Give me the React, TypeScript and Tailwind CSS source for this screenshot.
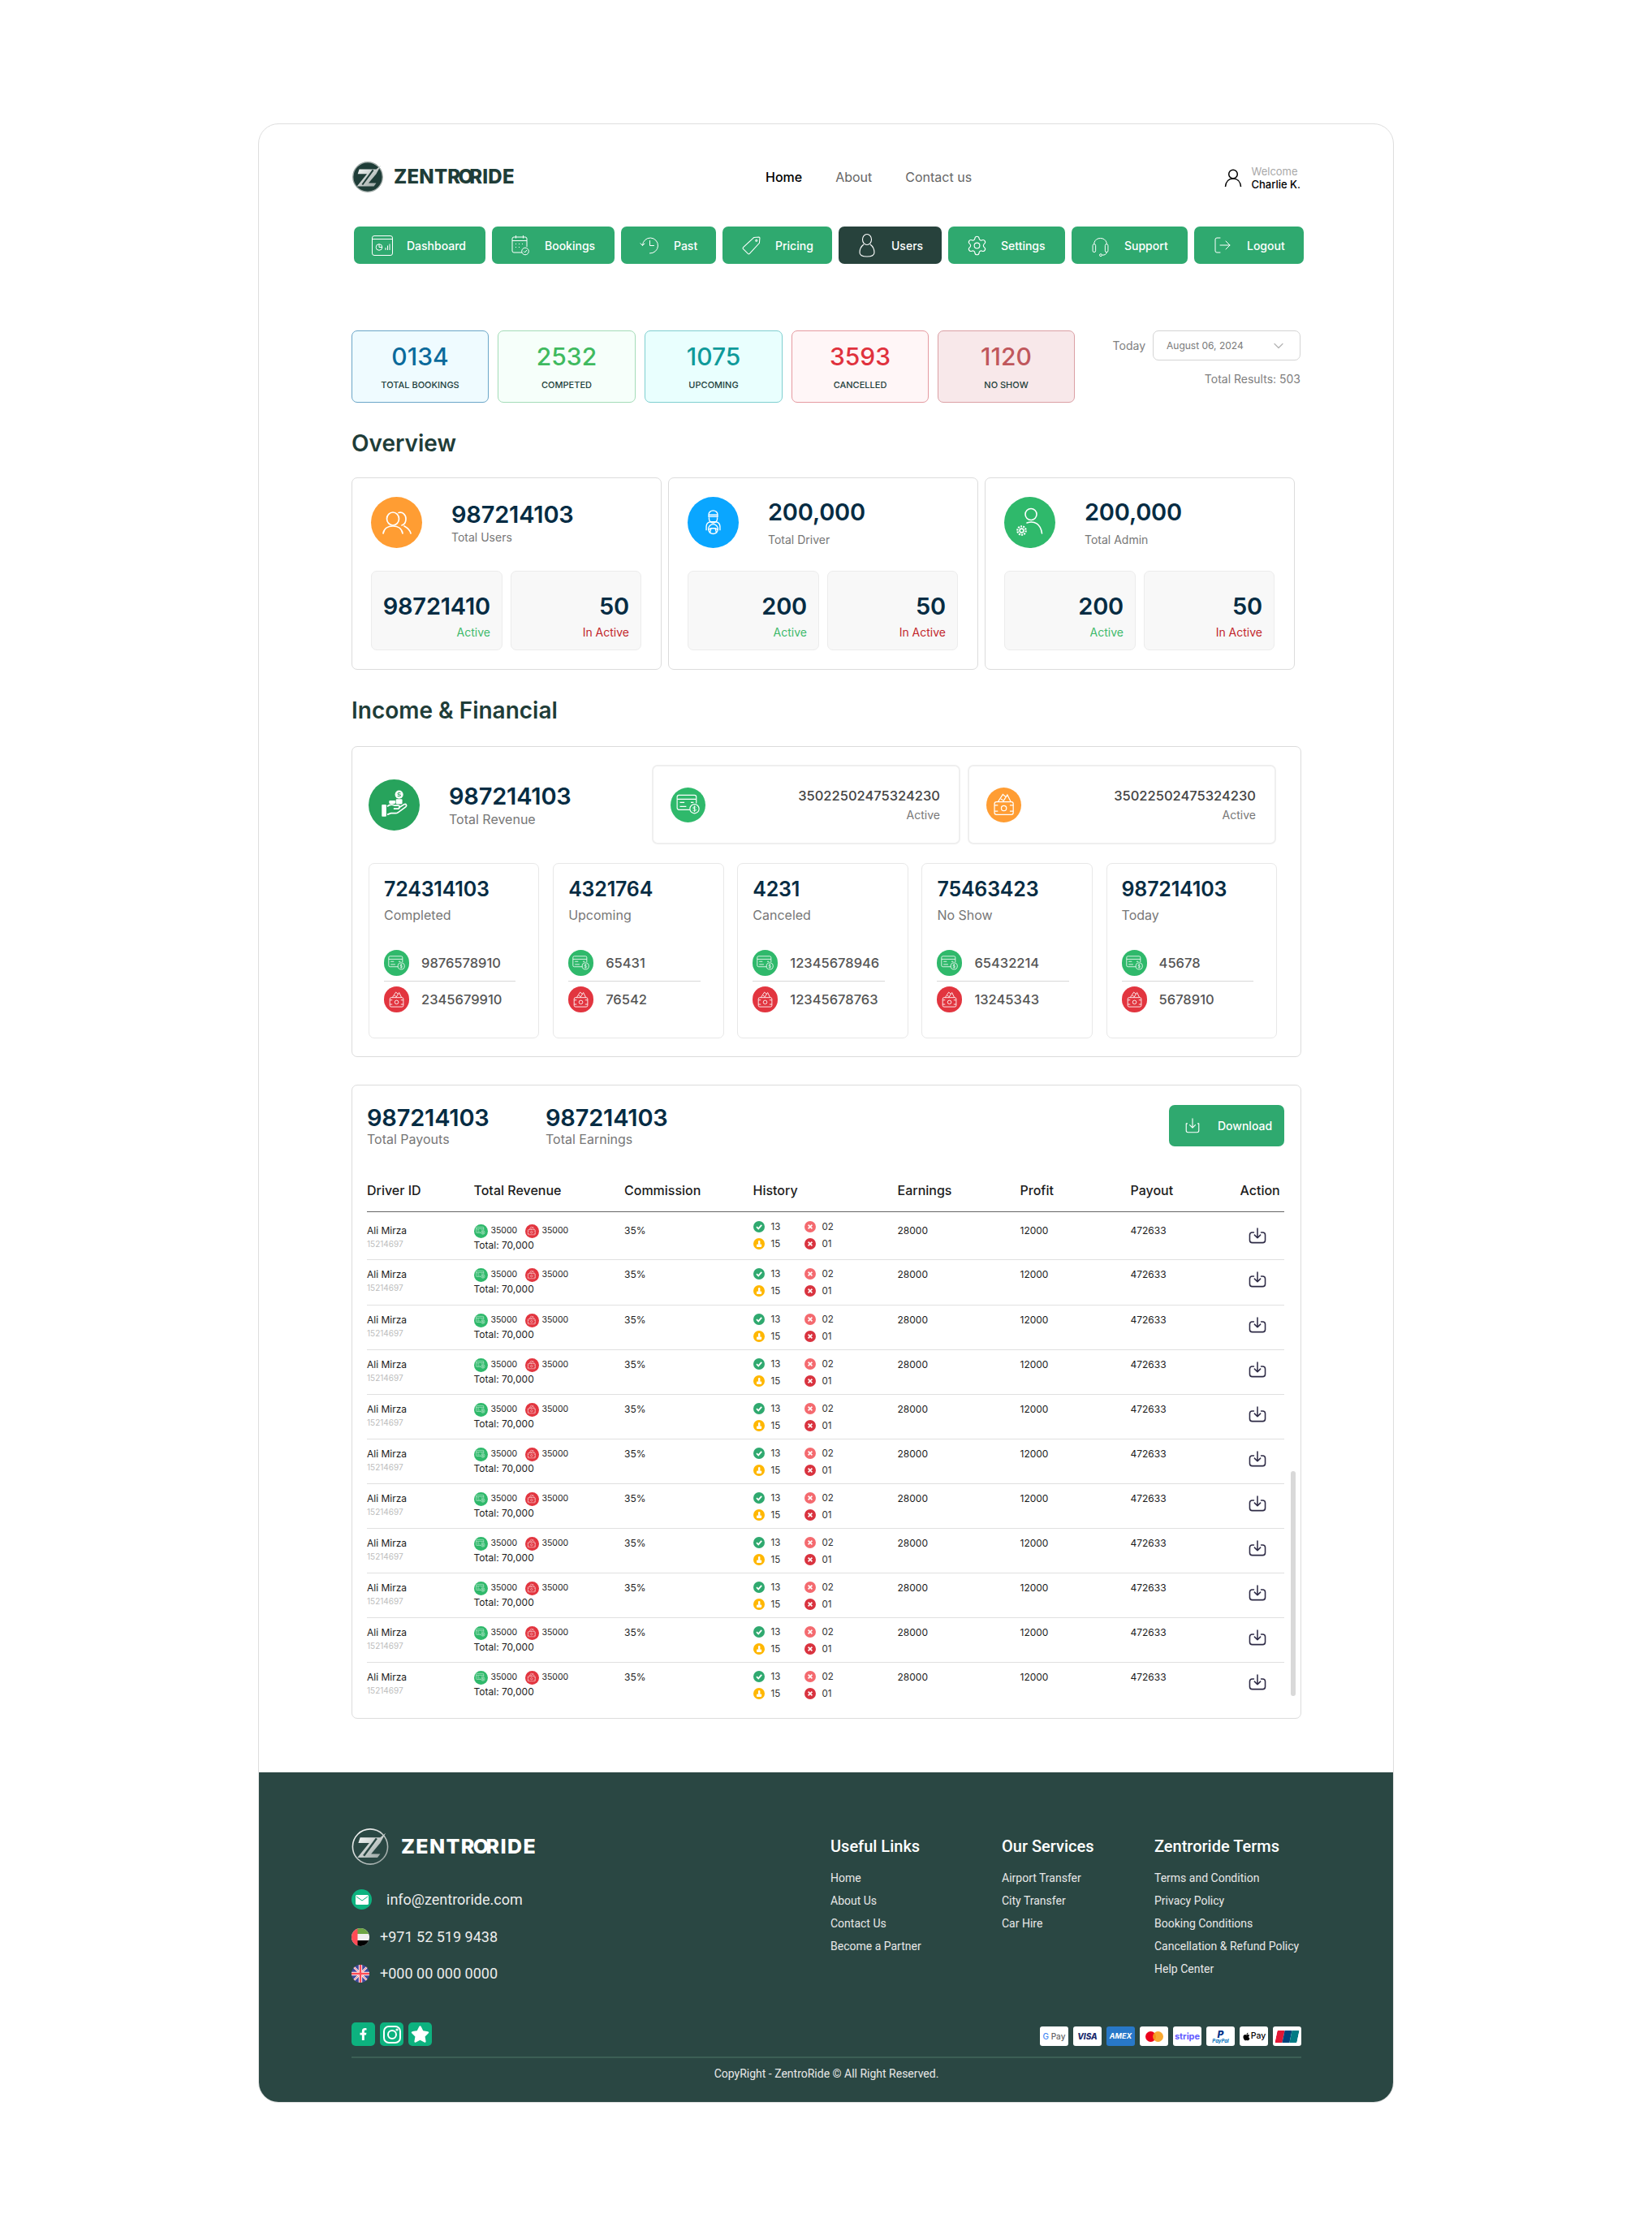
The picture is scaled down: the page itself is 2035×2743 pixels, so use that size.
import React from "react";
import { ChevronDown, Settings, LogOut } from "lucide-react";
import { FaApple, FaFacebookF, FaStar } from "react-icons/fa";

const Logo = ({ id, dark }: { id: string; dark?: boolean }) => (
  <svg viewBox="0 0 40 40" className="w-full h-full">
    <defs>
      <linearGradient id={id} x1="0" y1="0" x2="1" y2="1">
        <stop offset="0" stopColor="#ffffff" />
        <stop offset="1" stopColor="#8f9c99" />
      </linearGradient>
    </defs>
    <circle cx="20" cy="20" r="19.2" fill={dark ? "#1f3d38" : "#2a4743"} stroke={dark ? "#9aa5a2" : `url(#${id})`} strokeWidth="1.4" />
    <path d="M9 10 H31 L37 5 L31 16 L21 28 H31 L28 32 H6 L19 16 H7 Z" fill={`url(#${id})`} />
    <path d="M27 11 L13 30" stroke={dark ? "#1f3d38" : "#2a4743"} strokeWidth="2.2" />
  </svg>
);

const Wordmark = ({ className }: { className: string }) => (
  <span className={`font-['Inter',sans-serif] font-extrabold whitespace-nowrap ${className}`}>
    ZENTR<span className="-ml-[3px]">O</span>
    <span className="-ml-[5px]">R</span>IDE
  </span>
);

const DashboardIcon = () => (
  <svg viewBox="0 0 26 25" fill="none" stroke="currentColor" strokeWidth="1" className="w-[26px] h-[25px]">
    <rect x="0.5" y="0.5" width="25" height="24" rx="2.5" />
    <path d="M0.5 4.5 H25.5" />
    <circle cx="9" cy="14.5" r="3.8" />
    <path d="M9 10.7 V14.5 H12.8 M17 18 V15 M19.5 18 V12.5 M22 18 V10.5" />
  </svg>
);

const CalendarIcon = () => (
  <svg viewBox="0 0 22 26" fill="none" stroke="currentColor" strokeWidth="1" className="w-[22px] h-[26px]">
    <path d="M13 22 H3 a2 2 0 0 1 -2 -2 V5 a2 2 0 0 1 2 -2 H17 a2 2 0 0 1 2 2 V15" />
    <path d="M1 7.5 H19 M5.5 1 V4.5 M14.5 1 V4.5" />
    <path d="M5 11.5 H6 M9 11.5 H10 M13 11.5 H14 M5 15.5 H6 M9 15.5 H10" strokeDasharray="1 1" />
    <circle cx="17" cy="20.5" r="4.3" />
    <path d="M15.2 20.6 L16.5 22 L18.9 19" />
  </svg>
);

const PastIcon = () => (
  <svg viewBox="0 0 24 24" fill="none" stroke="currentColor" strokeWidth="1" strokeLinecap="round" className="w-[24px] h-[24px]">
    <path d="M3.5 12 a9.5 9.5 0 1 1 9 10" />
    <path d="M1 9.8 L3.5 12.5 L6 10" />
    <path d="M12.5 6.5 V12.5 H17.5" />
  </svg>
);

const TagIcon = () => (
  <svg viewBox="0 0 22 22" fill="none" stroke="currentColor" strokeWidth="1" className="w-[23px] h-[23px]">
    <path d="M14 1.5 L20 1 a1 1 0 0 1 1 1 L20.5 8 L9 20.5 a1.5 1.5 0 0 1 -2 0 L1.5 15 a1.5 1.5 0 0 1 0 -2 Z" />
    <circle cx="17" cy="5" r="1" />
  </svg>
);

const UsersTabIcon = () => (
  <svg viewBox="0 0 20 30" fill="none" stroke="currentColor" strokeWidth="1.1" className="w-[20px] h-[30px]">
    <ellipse cx="10" cy="8" rx="5.5" ry="6.5" />
    <path d="M6 14 C2 17 1 20 1 24 C1 28 4 29 10 29 C16 29 19 28 19 24 C19 20 18 17 14 14" />
  </svg>
);

const HeadsetIcon = () => (
  <svg viewBox="0 0 24 30" fill="none" stroke="currentColor" strokeWidth="1.1" className="w-[23px] h-[27px]">
    <path d="M3.5 13 V11 a9 9 0 0 1 17 0 V13" />
    <rect x="1.5" y="13" width="4" height="11" rx="2" />
    <rect x="18.5" y="13" width="4" height="11" rx="2" />
    <path d="M20.5 24 C20.5 27 18 28 14.5 28" />
    <circle cx="12.5" cy="28" r="1.6" />
  </svg>
);

const HeaderUser = () => (
  <svg viewBox="0 0 22 22" fill="none" stroke="black" strokeWidth="1.5" className="w-[22px] h-[22px]">
    <circle cx="11" cy="6.5" r="5.3" />
    <path d="M1.5 22 C2 16 5.5 12 11 12 C16.5 12 20 16 20.5 22" />
  </svg>
);

const TrayDownload = ({ className }: { className: string }) => (
  <svg viewBox="0 0 24 22" fill="none" stroke="currentColor" strokeWidth="1.7" strokeLinecap="round" strokeLinejoin="round" className={className}>
    <path d="M12 1 V13.5 M8 10 L12 14 L16 10" />
    <path d="M7 6.5 H5 a3.5 3.5 0 0 0 -3.5 3.5 V17 a3.5 3.5 0 0 0 3.5 3.5 H19 a3.5 3.5 0 0 0 3.5 -3.5 V10 a3.5 3.5 0 0 0 -3.5 -3.5 H17" />
  </svg>
);

const OpenTray = () => (
  <svg viewBox="0 0 20 22" fill="none" stroke="currentColor" strokeWidth="1.3" strokeLinecap="round" strokeLinejoin="round" className="w-[20px] h-[19px]">
    <path d="M10 1 V14 M6 10 L10 14 L14 10" />
    <path d="M2.5 8 H1 V18 a2.5 2.5 0 0 0 2.5 2.5 H16.5 a2.5 2.5 0 0 0 2.5 -2.5 V8 H17.5" />
  </svg>
);

const CardDollar = () => (
  <svg viewBox="0 0 26 24" fill="none" stroke="white" strokeWidth="1" className="w-[68%] h-[68%]">
    <path d="M15 18 H3 a2 2 0 0 1 -2 -2 V4 a2 2 0 0 1 2 -2 H20 a2 2 0 0 1 2 2 V11" />
    <path d="M1 6.5 H22 M4 10 H9 M16 10 H19 M4 14.5 H11" />
    <circle cx="20" cy="17" r="5" />
    <path d="M21.7 15.4 C21 14.4 18.4 14.6 18.4 16 C18.4 17.6 21.8 16.6 21.8 18.2 C21.8 19.5 19 19.6 18.2 18.6 M20 13.6 V20.4" strokeWidth="0.8" />
  </svg>
);

const WalletMoney = () => (
  <svg viewBox="0 0 24 24" fill="none" stroke="white" strokeWidth="1" className="w-[68%] h-[68%]">
    <rect x="2.5" y="9.5" width="19" height="13" rx="2" />
    <circle cx="12" cy="16" r="2.6" />
    <path d="M2.5 13 H6 M18 13 H21.5 M2.5 19 H6 M18 19 H21.5" />
    <path d="M6 9.5 L11 2 L14.5 5 M11 9.5 L15.5 2.5 L19 9.5 M9 6.5 L11 8" />
  </svg>
);

const TwoUsersIcon = () => (
  <svg viewBox="0 0 40 28" fill="none" stroke="white" strokeWidth="1.7" strokeLinecap="round" className="w-[40px] h-[28px]">
    <ellipse cx="15" cy="9" rx="7.5" ry="8" />
    <path d="M3 27 C4 21 9 18 15 18 C21 18 26 21 27 27" />
    <path d="M22 1.5 C27 0 31 4 31 9 C31 13 29 16 26 17" />
    <path d="M29 18 C33 20 36 23 37 27" />
  </svg>
);

const HandCoinsIcon = () => (
  <svg viewBox="0 0 32 32" className="w-[36px] h-[36px]">
    <rect x="2" y="16" width="5" height="13" rx="0.8" fill="white" />
    <path d="M8 18 C11 15.5 13.5 15.5 16 17 H20 C22 17 22 20.5 20 20.5 H15 M20.5 19.5 L26.5 15.8 C28.6 14.8 30 17 28.2 18.6 L20 24.5 C19 25.2 18 25.5 17 25.5 H12 L8 27" fill="none" stroke="white" strokeWidth="1.5" />
    <circle cx="21" cy="5" r="4.5" fill="white" />
    <path d="M22.6 3.6 C22 2.8 19.6 2.9 19.6 4.2 C19.6 5.6 22.6 4.6 22.6 6 C22.6 7.2 20 7.2 19.3 6.4" fill="none" stroke="#27a35c" strokeWidth="0.9" />
    <rect x="17.5" y="10" width="7" height="5.5" rx="1" fill="white" />
    <rect x="10" y="11.5" width="7" height="3.5" rx="1" fill="white" />
  </svg>
);

const DriverIcon = () => (
  <svg viewBox="0 0 32 36" fill="none" stroke="white" strokeWidth="1.6" className="w-[27px] h-[34px]">
    <path d="M9.5 9 V6 a6.5 6 0 0 1 13 0 V9 Z M9 6.5 H23" />
    <path d="M10 10 V12 a6 6 0 0 0 12 0 V10" />
    <path d="M6 29 V23 a7 7 0 0 1 6 -6.5 H20 a7 7 0 0 1 6 6.5 V29" />
    <circle cx="16" cy="27" r="7" />
    <path d="M9 28 L13 26 H19 L23 28 M13 26 L11 33 M19 26 L21 33" />
  </svg>
);

const AdminIcon = () => (
  <svg viewBox="0 0 63 63" fill="none" stroke="white" strokeWidth="1.6" strokeLinecap="round" className="w-[63px] h-[63px]">
    <circle cx="33" cy="21.5" r="7" />
    <path d="M28 32 C37 29 45 33 46.5 45" />
    <circle cx="21.5" cy="41.5" r="5.2" strokeDasharray="2 1.2" strokeLinecap="butt" strokeWidth="2.2" />
    <circle cx="21.5" cy="41.5" r="2.4" />
  </svg>
);

const UaeFlag = () => (
  <svg viewBox="0 0 22 22" className="w-[22px] h-[22px]">
    <clipPath id="uae"><circle cx="11" cy="11" r="11" /></clipPath>
    <g clipPath="url(#uae)">
      <rect width="22" height="22" fill="#f0f0f0" />
      <rect x="7" width="15" height="7" fill="#6da544" />
      <rect x="7" y="15" width="15" height="7" fill="#000" />
      <rect width="7.5" height="22" fill="#ff4b55" />
    </g>
  </svg>
);

const UkFlag = () => (
  <svg viewBox="0 0 22 22" className="w-[22px] h-[22px]">
    <clipPath id="uk"><circle cx="11" cy="11" r="11" /></clipPath>
    <g clipPath="url(#uk)">
      <rect width="22" height="22" fill="#41479b" />
      <path d="M0 0 L22 22 M22 0 L0 22" stroke="#f5f5f5" strokeWidth="2.6" />
      <path d="M0 0 L22 22 M22 0 L0 22" stroke="#ff4b55" strokeWidth="0.8" />
      <path d="M11 0 V22 M0 11 H22" stroke="#f5f5f5" strokeWidth="4.4" />
      <path d="M11 0 V22 M0 11 H22" stroke="#ff4b55" strokeWidth="2.4" />
    </g>
  </svg>
);

const tabs = [
  { label: "Dashboard", w: "w-[162px]", icon: <DashboardIcon /> },
  { label: "Bookings", w: "w-[151px]", icon: <CalendarIcon /> },
  { label: "Past", w: "w-[117px]", icon: <PastIcon /> },
  { label: "Pricing", w: "w-[135px]", icon: <TagIcon /> },
  { label: "Users", w: "w-[127px]", icon: <UsersTabIcon />, active: true },
  { label: "Settings", w: "w-[144px]", icon: <Settings size={27} strokeWidth={1} /> },
  { label: "Support", w: "w-[143px]", icon: <HeadsetIcon /> },
  { label: "Logout", w: "w-[135px]", icon: <LogOut size={24} strokeWidth={1} /> },
];

const stats = [
  { value: "0134", label: "TOTAL BOOKINGS", box: "bg-[#effbff] border-[#6ba6c8]", text: "text-[#0b6a9b]", w: "w-[169px]" },
  { value: "2532", label: "COMPETED", box: "bg-[#f6fffa] border-[#a4dcb8]", text: "text-[#3fba5f]", w: "w-[170px]" },
  { value: "1075", label: "UPCOMING", box: "bg-[#e9fffe] border-[#7fcfd0]", text: "text-[#0f9a9a]", w: "w-[170px]" },
  { value: "3593", label: "CANCELLED", box: "bg-[#fff6f7] border-[#e59aa0]", text: "text-[#e0323e]", w: "w-[169px]" },
  { value: "1120", label: "NO SHOW", box: "bg-[#f8e8ea] border-[#dba0a5]", text: "text-[#c0575c]", w: "w-[169px]" },
];

const overview = [
  { value: "987214103", label: "Total Users", circle: "bg-[#ff9d33]", icon: <TwoUsersIcon />, active: "98721410", inactive: "50", head: "gap-0" },
  { value: "200,000", label: "Total Driver", circle: "bg-[#0aa6ff]", icon: <DriverIcon />, active: "200", inactive: "50", head: "gap-[6px]" },
  { value: "200,000", label: "Total Admin", circle: "bg-[#2fb96b]", icon: <AdminIcon />, active: "200", inactive: "50", head: "gap-[6px]" },
];

const bookings = [
  { value: "724314103", label: "Completed", a: "9876578910", b: "2345679910" },
  { value: "4321764", label: "Upcoming", a: "65431", b: "76542" },
  { value: "4231", label: "Canceled", a: "12345678946", b: "12345678763" },
  { value: "75463423", label: "No Show", a: "65432214", b: "13245343" },
  { value: "987214103", label: "Today", a: "45678", b: "5678910" },
];

const Dot = ({ className, children }: { className: string; children: React.ReactNode }) => (
  <span className={`flex items-center justify-center rounded-full shrink-0 ${className}`}>{children}</span>
);

const MiniCheck = () => (
  <svg viewBox="0 0 14 14" fill="none" stroke="white" strokeWidth="1.8" className="w-[14px] h-[14px]">
    <path d="M4 7.2 L6.2 9.4 L10.2 4.8" />
  </svg>
);

const MiniX = () => (
  <svg viewBox="0 0 14 14" fill="none" stroke="white" strokeWidth="1.6" className="w-[14px] h-[14px]">
    <path d="M4.6 4.6 L9.4 9.4 M9.4 4.6 L4.6 9.4" />
  </svg>
);

const MiniWait = () => (
  <svg viewBox="0 0 14 14" fill="white" className="w-[14px] h-[14px]">
    <rect x="6" y="3" width="2.4" height="5" rx="1.1" />
    <rect x="4" y="7.5" width="6.2" height="3.4" rx="1" />
  </svg>
);

const rowCols = "grid grid-cols-[131.5px_185.5px_158.5px_178px_151px_136px_135px_55px]";

const DriverRow = ({ index }: { index: number }) => {
  const first = index === 0;
  const body = first ? "pt-[15px]" : "pt-[10px]";
  return (
    <div
      className={`${rowCols} text-[12px] text-[#1c1c1c] ${index < 10 ? "border-b border-[#e0e0e0]" : ""} ${
        first ? "h-[59px]" : index === 1 ? "h-[56px]" : "h-[55px]"
      }`}
    >
      <div className={body}>
        <p className="leading-[16px]">Ali Mirza</p>
        <p className="leading-[14px] mt-px text-[10px] text-[#bdbdbd]">15214697</p>
      </div>
      <div className={first ? "pt-[14px]" : "pt-[9px]"}>
        <div className="flex items-center h-[18px] text-[10.5px]">
          <Dot className="w-[17px] h-[17px] bg-[#2fb96b]"><CardDollar /></Dot>
          <span className="ml-1 w-[42px]">35000</span>
          <Dot className="w-[17px] h-[17px] bg-[#e2353f]"><WalletMoney /></Dot>
          <span className="ml-1">35000</span>
        </div>
        <p className="leading-[16px] mt-px">Total: 70,000</p>
      </div>
      <div className={`${body} leading-[16px]`}>35%</div>
      <div className={`${first ? "pt-[11px]" : "pt-[10px]"} grid grid-cols-[63px_60px] content-start gap-y-[7px] text-[11.5px] leading-[14px] text-[#333]`}>
        <div className="flex gap-2"><Dot className="w-[14px] h-[14px] bg-[#2fa96f]"><MiniCheck /></Dot>13</div>
        <div className="flex gap-2"><Dot className="w-[14px] h-[14px] bg-[#f46a6f]"><MiniX /></Dot>02</div>
        <div className="flex gap-2"><Dot className="w-[14px] h-[14px] bg-[#ffb700]"><MiniWait /></Dot>15</div>
        <div className="flex gap-2"><Dot className="w-[14px] h-[14px] bg-[#d9333f]"><MiniX /></Dot>01</div>
      </div>
      <div className={`${body} leading-[16px]`}>28000</div>
      <div className={`${body} leading-[16px]`}>12000</div>
      <div className={`${body} leading-[16px]`}>472633</div>
      <div className={first ? "pt-[19px]" : "pt-[14px]"}>
        <TrayDownload className="w-[22px] h-[20px] ml-[10px] text-[#2d2a45]" />
      </div>
    </div>
  );
};

const PayBadge = ({ className, children }: { className?: string; children: React.ReactNode }) => (
  <div className={`w-[35px] h-[24px] rounded-[3px] flex items-center justify-center whitespace-nowrap ${className ?? "bg-white"}`}>
    {children}
  </div>
);

const footerLinks = [
  { title: "Useful Links", w: "w-[211px]", items: ["Home", "About Us", "Contact Us", "Become a Partner"] },
  { title: "Our Services", w: "w-[188px]", items: ["Airport Transfer", "City Transfer", "Car Hire"] },
  {
    title: "Zentroride Terms",
    w: "w-[181px]",
    items: ["Terms and Condition", "Privacy Policy", "Booking Conditions", "Cancellation & Refund Policy", "Help Center"],
  },
];

const numberText = "font-semibold text-[#062c43] tracking-[-0.2px]";

export default function App() {
  return (
    <div className="bg-white px-[318px] pt-[152px] pb-[153px] font-['Inter',sans-serif]">
      <div className="rounded-[25px] border border-[#dedede] overflow-hidden bg-white">
        <div className="pl-[114px] pr-[113px]">
          {/* Header */}
          <div className="pt-[46px] flex items-center">
            <div className="w-[510px] flex items-center gap-[13px] pl-[1px]">
              <div className="w-[38px] h-[38px]"><Logo id="lg-top" dark /></div>
              <Wordmark className="text-[24px] leading-[38px] text-[#1f3d38] tracking-[0.2px]" />
            </div>
            <nav className="flex gap-[41px] text-[16px]">
              <a className="text-black font-medium">Home</a>
              <a className="text-[#666]">About</a>
              <a className="text-[#666]">Contact us</a>
            </nav>
            <div className="ml-auto pt-[2px] pr-px flex items-center gap-[12px]">
              <HeaderUser />
              <div className="text-[13px] leading-[16px]">
                <p className="text-[#a8a8a8]">Welcome</p>
                <p className="text-black font-medium">Charlie K.</p>
              </div>
            </div>
          </div>

          {/* Tabs */}
          <div className="mt-[42px] pl-[3px] flex gap-[8px]">
            {tabs.map((t) => (
              <div
                key={t.label}
                className={`h-[46px] shrink-0 rounded-[7px] flex items-center text-white text-[14px] font-medium ${t.w} ${
                  t.active ? "bg-[#27423c]" : "bg-[#2fa96f]"
                }`}
              >
                <span className="w-[65px] pl-[14px] pr-[9px] flex justify-center shrink-0">{t.icon}</span>
                {t.label}
              </div>
            ))}
          </div>

          {/* Stats */}
          <div className="mt-[82px] flex gap-[11px] items-start">
            {stats.map((s) => (
              <div key={s.label} className={`h-[89px] rounded-[7px] border flex flex-col items-center pt-[13px] ${s.box} ${s.w}`}>
                <p className={`text-[30px] leading-[36px] font-medium ${s.text}`}>{s.value}</p>
                <p className="mt-[9px] text-[11px] leading-[16px] font-medium text-[#23403b]">{s.label}</p>
              </div>
            ))}
            <div className="ml-auto pr-px">
              <div className="flex items-center gap-[9px]">
                <span className="text-[14px] text-[#808080]">Today</span>
                <div className="w-[182px] h-[37px] rounded-[7px] border border-[#d4d4d4] pl-[16px] pr-[16px] flex items-center justify-between">
                  <span className="text-[12px] text-[#7a7a7a]">August 06, 2024</span>
                  <ChevronDown size={20} strokeWidth={1.5} className="text-[#b5b5b5]" />
                </div>
              </div>
              <p className="mt-[13px] text-right text-[14px] leading-[20px] text-[#808080]">Total Results: 503</p>
            </div>
          </div>

          {/* Overview */}
          <h2 className="mt-[33px] text-[28px] leading-[34px] font-semibold text-[#1f3d38]">Overview</h2>
          <div className="mt-[25px] flex gap-[8px]">
            {overview.map((c) => (
              <div key={c.label} className="w-[382px] h-[237px] rounded-[7px] border border-[#dcdcdc] px-[23px] pt-[23px]">
                <div className="flex items-center gap-[36px]">
                  <div className={`w-[63px] h-[63px] rounded-full flex items-center justify-center ${c.circle}`}>{c.icon}</div>
                  <div className={`flex flex-col ${c.head}`}>
                    <p className={`text-[29px] leading-[36px] ${numberText}`}>{c.value}</p>
                    <p className="text-[14px] leading-[20px] text-[#777]">{c.label}</p>
                  </div>
                </div>
                <div className="mt-[28px] flex gap-[10px]">
                  <div className="w-[162px] h-[98px] rounded-[7px] bg-[#f8f8f8] border border-[#ececec] pr-[14px] pt-[25px] text-right">
                    <p className={`text-[29px] leading-[36px] ${numberText}`}>{c.active}</p>
                    <p className="mt-[4px] text-[14px] leading-[20px] text-[#3fba6c]">Active</p>
                  </div>
                  <div className="w-[161px] h-[98px] rounded-[7px] bg-[#f8f8f8] border border-[#ececec] pr-[14px] pt-[25px] text-right">
                    <p className={`text-[29px] leading-[36px] ${numberText}`}>{c.inactive}</p>
                    <p className="mt-[4px] text-[14px] leading-[20px] text-[#c2272d]">In Active</p>
                  </div>
                </div>
              </div>
            ))}
          </div>

          {/* Income */}
          <h2 className="mt-[33px] text-[28px] leading-[34px] font-semibold text-[#1f3d38]">Income &amp; Financial</h2>
          <div className="mt-[27px] h-[383px] rounded-[7px] border border-[#dcdcdc] pl-[20px] pr-[29px] pt-[22px]">
            <div className="flex items-center">
              <div className="w-[349px] flex items-center gap-[36px]">
                <div className="w-[63px] h-[63px] rounded-full bg-[#27a35c] flex items-center justify-center"><HandCoinsIcon /></div>
                <div>
                  <p className={`text-[29px] leading-[36px] ${numberText}`}>987214103</p>
                  <p className="text-[16px] leading-[20px] text-[#777]">Total Revenue</p>
                </div>
              </div>
              <div className="flex gap-[9px]">
                {[
                  { bg: "bg-[#2fb96b]", icon: <CardDollar /> },
                  { bg: "bg-[#ff9d33]", icon: <WalletMoney /> },
                ].map((b) => (
                  <div key={b.bg} className="w-[380px] h-[98px] rounded-[7px] border-2 border-[#efefef] flex items-center pl-[21px] pr-[23px]">
                    <Dot className={`w-[43px] h-[43px] ${b.bg}`}>{b.icon}</Dot>
                    <div className="ml-auto text-right">
                      <p className="text-[16.5px] leading-[22px] font-medium text-[#444]">35022502475324230</p>
                      <p className="mt-[3px] text-[14px] leading-[20px] text-[#777]">Active</p>
                    </div>
                  </div>
                ))}
              </div>
            </div>
            <div className="mt-[23px] flex gap-[16.7px]">
              {bookings.map((b) => (
                <div key={b.label} className="w-[210.5px] h-[216px] rounded-[7px] border border-[#e8e8e8] pl-[18px] pr-[28px] pt-[16px]">
                  <p className={`text-[25px] leading-[30px] ${numberText}`}>{b.value}</p>
                  <p className="mt-[7px] text-[16px] leading-[20px] text-[#777]">{b.label}</p>
                  <div className="mt-[33px] flex items-center gap-[15px] text-[16.5px] font-medium text-[#555]">
                    <Dot className="w-[31px] h-[32px] bg-[#2fb96b]"><CardDollar /></Dot>
                    {b.a}
                  </div>
                  <div className="my-[6px] border-t border-[#d8d8d8]" />
                  <div className="flex items-center gap-[15px] text-[16.5px] font-medium text-[#555]">
                    <Dot className="w-[31px] h-[32px] bg-[#e2353f]"><WalletMoney /></Dot>
                    {b.b}
                  </div>
                </div>
              ))}
            </div>
          </div>

          {/* Payouts table */}
          <div className="mt-[34px] h-[781px] relative rounded-[7px] border border-[#dcdcdc] pl-[18px] pr-[20px] pt-[24px]">
            <div className="flex">
              <div className="w-[220px]">
                <p className={`text-[29px] leading-[32px] ${numberText}`}>987214103</p>
                <p className="text-[16px] leading-[20px] text-[#777]">Total Payouts</p>
              </div>
              <div>
                <p className={`text-[29px] leading-[32px] ${numberText}`}>987214103</p>
                <p className="text-[16px] leading-[20px] text-[#777]">Total Earnings</p>
              </div>
              <button className="ml-auto w-[142px] h-[51px] rounded-[7px] bg-[#2fa96f] text-white text-[14px] font-medium flex items-center pl-[19px] gap-[21px]">
                <OpenTray />
                Download
              </button>
            </div>
            <div className={`${rowCols} mt-[41px] pb-[14px] border-b border-[#666] text-[16px] leading-[24px] font-medium text-[#1c1c1c]`}>
              {["Driver ID", "Total Revenue", "Commission", "History", "Earnings", "Profit", "Payout", "Action"].map((h) => (
                <div key={h}>{h}</div>
              ))}
            </div>
            {Array.from({ length: 11 }).map((_, i) => (
              <DriverRow key={i} index={i} />
            ))}
            <div className="absolute right-[6px] top-[475px] w-[6px] h-[277px] rounded-full bg-[#d9d9d9]" />
          </div>
        </div>

        {/* Footer */}
        <footer className="mt-[66px] h-[406px] bg-[#2a4743] pl-[114px] pr-[113px] pt-[69px] text-white font-['Roboto',sans-serif]">
          <div className="flex items-start">
            <div className="w-[590px]">
              <div className="flex items-center gap-[15px]">
                <div className="w-[46px] h-[45px]"><Logo id="lg-foot" /></div>
                <Wordmark className="text-[25px] leading-[45px] tracking-[1.4px]" />
              </div>
              <div className="mt-[30px] flex items-center gap-[18px] text-[18px] leading-[25px] text-[#ececec]">
                <span className="w-[25px] h-[25px] rounded-full bg-[#0db27f] flex items-center justify-center">
                  <svg viewBox="0 0 16 12" className="w-[16px] h-[12px]">
                    <rect width="16" height="12" rx="1.5" fill="white" />
                    <path d="M1 2 L8 7 L15 2" fill="none" stroke="#0db27f" strokeWidth="1" />
                  </svg>
                </span>
                info@zentroride.com
              </div>
              <div className="mt-[23px] flex items-center gap-[13px] text-[18px] leading-[22px] text-[#ececec]">
                <UaeFlag />
                +971 52 519 9438
              </div>
              <div className="mt-[23px] flex items-center gap-[13px] text-[18px] leading-[22px] text-[#ececec]">
                <UkFlag />
                +000 00 000 0000
              </div>
            </div>
            {footerLinks.map((col) => (
              <div key={col.title} className={`pt-[10px] ${col.w}`}>
                <p className="text-[20px] leading-[24px] font-medium whitespace-nowrap">{col.title}</p>
                <ul className="mt-[17px] flex flex-col gap-[8px] text-[14px] leading-[20px] text-[#e8e8e8]">
                  {col.items.map((item) => (
                    <li key={item} className="whitespace-nowrap">{item}</li>
                  ))}
                </ul>
              </div>
            ))}
          </div>

          <div className="mt-[49px] flex items-end justify-between h-[29px]">
            <div className="flex gap-[6px]">
              <div className="w-[29px] h-[29px] rounded-[5px] bg-[#0db27f] flex items-center justify-center"><FaFacebookF size={15} /></div>
              <div className="w-[29px] h-[29px] rounded-[5px] bg-[#0db27f] flex items-center justify-center">
                <svg viewBox="0 0 24 24" fill="none" stroke="white" strokeWidth="2" className="w-[24px] h-[24px]">
                  <rect x="2" y="2" width="20" height="20" rx="6" />
                  <circle cx="12" cy="12" r="5" />
                  <circle cx="18" cy="6" r="0.6" fill="white" />
                </svg>
              </div>
              <div className="w-[29px] h-[29px] rounded-[5px] bg-[#0db27f] flex items-center justify-center"><FaStar size={23} /></div>
            </div>
            <div className="flex gap-[6px] font-['Inter',sans-serif]">
              <PayBadge>
                <span className="text-[10px] font-medium text-[#666]"><span className="text-[#4285f4]">G</span> Pay</span>
              </PayBadge>
              <PayBadge><span className="text-[10px] font-extrabold italic text-[#1a2a6c]">VISA</span></PayBadge>
              <PayBadge className="bg-[#2878c8]"><span className="text-[9px] font-bold italic text-white">AMEX</span></PayBadge>
              <PayBadge>
                <span className="w-[13px] h-[13px] rounded-full bg-[#eb001b]" />
                <span className="w-[13px] h-[13px] rounded-full bg-[#f79e1b] -ml-[4px] opacity-90" />
              </PayBadge>
              <PayBadge><span className="text-[11px] font-bold text-[#635bff]">stripe</span></PayBadge>
              <PayBadge>
                <div className="flex flex-col items-center leading-none">
                  <span className="text-[12px] font-extrabold italic text-[#003087] leading-[11px]">P</span>
                  <span className="text-[6px] font-bold italic text-[#0070ba]">PayPal</span>
                </div>
              </PayBadge>
              <PayBadge>
                <span className="flex items-center text-[10.5px] font-medium text-black"><FaApple size={11} />Pay</span>
              </PayBadge>
              <PayBadge>
                <div className="w-[27px] h-[15px] -skew-x-12 flex overflow-hidden rounded-[1px]">
                  <span className="flex-1 bg-[#e21836]" />
                  <span className="flex-1 bg-[#00447c]" />
                  <span className="flex-1 bg-[#007b84]" />
                </div>
              </PayBadge>
            </div>
          </div>

          <div className="mt-[13px] border-t-2 border-[#3c5f55]" />
          <p className="mt-[9px] text-center text-[14px] leading-[20px] text-[#e8e8e8]">CopyRight - ZentroRide © All Right Reserved.</p>
        </footer>
      </div>
    </div>
  );
}
